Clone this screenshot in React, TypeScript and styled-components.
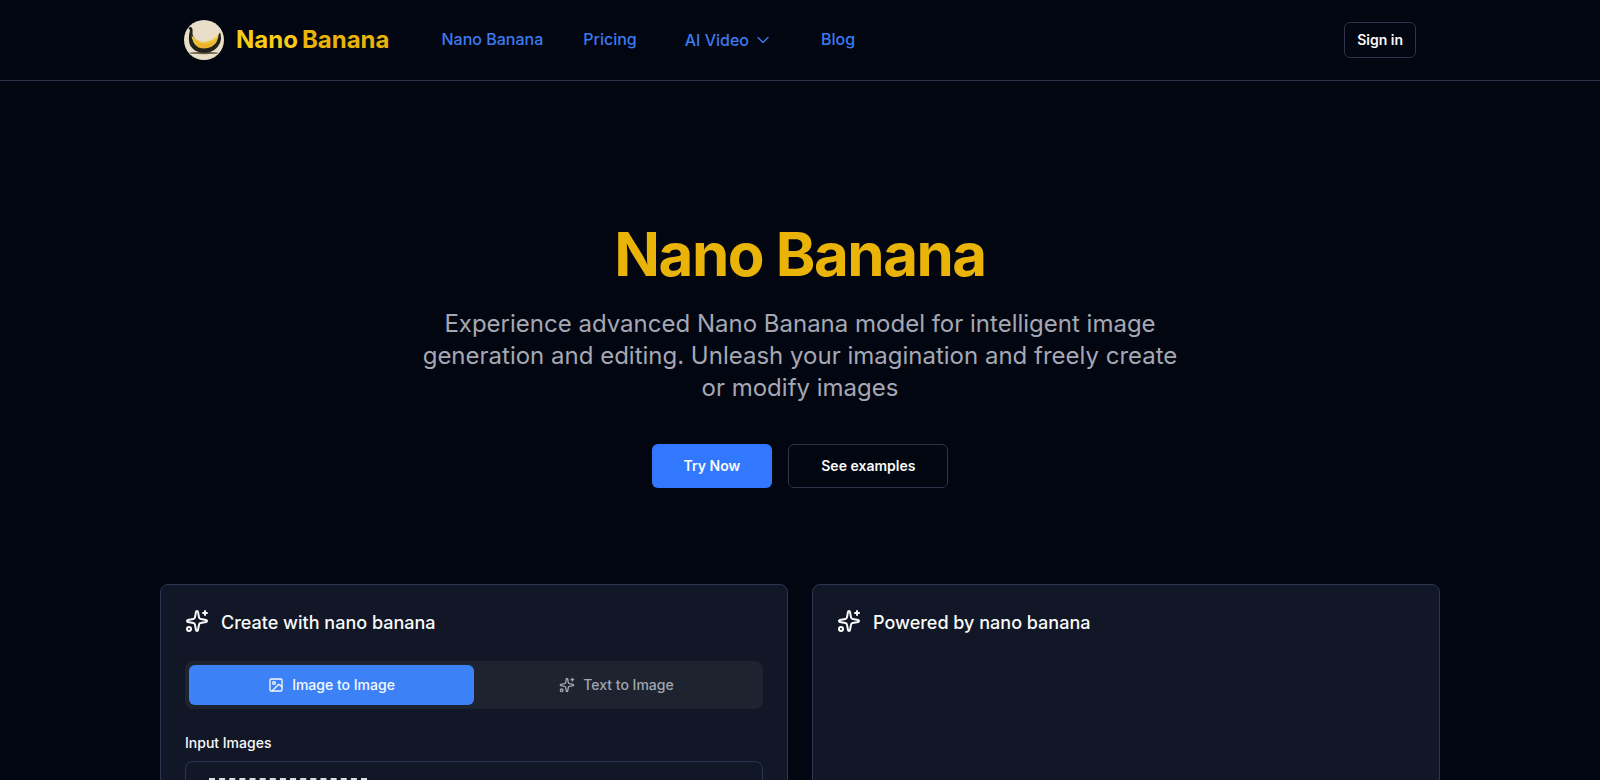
import React from "react";
import styled, { createGlobalStyle } from "styled-components";
import { ChevronDown, Image as ImageIcon } from "lucide-react";

const GlobalStyle = createGlobalStyle`
  *, *::before, *::after { box-sizing: border-box; }
  html { background: #020610; scrollbar-width: none; }
  body {
    margin: 0;
    background: #020610;
    color: #fafafa;
    font-family: Inter, "Liberation Sans", sans-serif;
    font-size: 16px;
    line-height: 24px;
  }
  h1, h2, p { margin: 0; }
  a { text-decoration: none; }
  button { font: inherit; color: inherit; cursor: pointer; }
`;

const Header = styled.header`
  border-bottom: 1px solid #2d3348;
`;

const HeaderInner = styled.div`
  max-width: 1280px;
  margin: 0 auto;
  padding: 20px 24px;
  display: flex;
  align-items: center;
`;

const Brand = styled.a`
  display: flex;
  align-items: center;
  gap: 12px;
`;

const BrandName = styled.span`
  display: flex;
  gap: 4px;
  color: #facc15;
  font-size: 24px;
  line-height: 32px;
  font-weight: 700;
`;

const BrandAccent = styled.span`
  color: #eab308;
`;

const Nav = styled.nav`
  display: flex;
  align-items: center;
  margin-left: 32px;
  color: #3c7af0;
  font-weight: 500;
`;

const NavLink = styled.a`
  color: inherit;
  padding: 7px 20px 9px;
`;

const NavMenuButton = styled.button`
  display: flex;
  align-items: center;
  gap: 4px;
  margin: 0 8px;
  padding: 8px 20px;
  border: 0;
  background: none;
  font-weight: 500;
`;

const Button = styled.button<{ $primary?: boolean; $large?: boolean }>`
  height: ${(p) => (p.$large ? 44 : 36)}px;
  padding: 0 ${(p) => (p.$large ? 32 : 12)}px;
  border: ${(p) => (p.$primary ? "0" : "1px solid #2d3348")};
  border-radius: 6px;
  background: ${(p) => (p.$primary ? "#3278ff" : "transparent")};
  font-size: 14px;
  line-height: 20px;
  font-weight: 600;
`;

const SignIn = styled(Button)`
  margin-left: auto;
`;

const Hero = styled.section`
  display: flex;
  flex-direction: column;
  align-items: center;
  padding: 143px 24px 96px;
  text-align: center;
`;

const HeroTitle = styled.h1`
  color: #eab308;
  font-size: 60px;
  line-height: 60px;
  font-weight: 700;
  letter-spacing: -0.025em;
`;

const HeroText = styled.p`
  max-width: 768px;
  margin-top: 24px;
  color: #a5a8b4;
  font-size: 24px;
  line-height: 32px;
`;

const HeroActions = styled.div`
  display: flex;
  gap: 16px;
  margin-top: 40px;
`;

const Workspace = styled.main`
  max-width: 1280px;
  margin: 0 auto;
  display: grid;
  grid-template-columns: 1fr 1fr;
  gap: 24px;
`;

const Card = styled.section`
  padding: 24px;
  border: 1px solid #2b3550;
  border-radius: 8px;
  background: #111726;
`;

const CardTitle = styled.h2`
  display: flex;
  align-items: flex-start;
  gap: 12px;
  font-size: 18px;
  line-height: 28px;
  font-weight: 500;
`;

const Tabs = styled.div`
  display: grid;
  grid-template-columns: 1fr 1fr;
  margin-top: 24px;
  padding: 4px;
  border-radius: 8px;
  background: #1e2330;
`;

const Tab = styled.button<{ $active?: boolean }>`
  display: flex;
  align-items: center;
  justify-content: center;
  gap: 8px;
  height: 40px;
  border: 0;
  border-radius: 6px;
  background: ${(p) => (p.$active ? "#3c82f6" : "transparent")};
  color: ${(p) => (p.$active ? "#f5f9ff" : "#a2a5af")};
  font-size: 14px;
  font-weight: 500;
`;

const FieldTitle = styled.p`
  margin-top: 24px;
  font-size: 14px;
  line-height: 20px;
  font-weight: 500;
`;

const UploadPanel = styled.div`
  margin-top: 8px;
  padding: 16px 23px;
  border: 1px solid #2b3550;
  border-radius: 8px;
`;

const UploadButton = styled.button`
  display: block;
  width: 158px;
  height: 158px;
  border: 2px dashed #dcdee4;
  background: none;
`;

function Sparkles({ size }: { size: number }) {
  return (
    <svg width={size} height={size} viewBox="0 0 24 24" fill="none" stroke="currentColor"
      strokeWidth="2" strokeLinecap="round" strokeLinejoin="round" aria-hidden="true">
      <path d="M11.017 2.814a1 1 0 0 1 1.966 0l1.051 5.558a2 2 0 0 0 1.594 1.594l5.558 1.051a1 1 0 0 1 0 1.966l-5.558 1.051a2 2 0 0 0-1.594 1.594l-1.051 5.558a1 1 0 0 1-1.966 0l-1.051-5.558a2 2 0 0 0-1.594-1.594l-5.558-1.051a1 1 0 0 1 0-1.966l5.558-1.051a2 2 0 0 0 1.594-1.594z" />
      <path d="M20 2v4M22 4h-4" />
      <circle cx="4" cy="20" r="2" />
    </svg>
  );
}

function BananaLogo() {
  return (
    <svg width="40" height="40" viewBox="0 0 40 40" aria-hidden="true">
      <defs>
        <clipPath id="disc"><circle cx="20" cy="20" r="20" /></clipPath>
        <linearGradient id="flesh" x1="0" y1="0" x2="0" y2="1">
          <stop offset="0" stopColor="#f9dc62" />
          <stop offset="1" stopColor="#eab022" />
        </linearGradient>
      </defs>
      <g clipPath="url(#disc)">
        <rect width="40" height="40" fill="#e9dfc8" />
        <ellipse cx="20" cy="33" rx="15" ry="1.2" fill="#6b6046" />
        <path d="M4.5 8.5L5.5 7L8 7.5L8.6 10Q8 14 9.5 17Q14 23 22 23Q30 21 36 12.5Q38 18 36 23Q32 32 21 33Q11 33 6.5 26Q3.5 20 6 10Z" fill="#20221c" />
        <path d="M7.5 15.5Q13 21.500 20 22Q28 21.500 34.800 13.500Q34 23 28 26.500Q21 30 14.500 27.500Q8.500 24 7.500 15.500Z" fill="url(#flesh)" />
        <path d="M9.500 19.500Q15 25.500 22 25.500Q29 24.500 33 18.500" fill="none" stroke="#d29a1a" strokeWidth="0.5" />
      </g>
    </svg>
  );
}

export default function App() {
  return (
    <>
      <GlobalStyle />
      <Header>
        <HeaderInner>
          <Brand href="#">
            <BananaLogo />
            <BrandName>
              <span>Nano</span>
              <BrandAccent>Banana</BrandAccent>
            </BrandName>
          </Brand>
          <Nav>
            <NavLink href="#create">Nano Banana</NavLink>
            <NavLink href="#pricing">Pricing</NavLink>
            <NavMenuButton type="button">
              AI Video
              <ChevronDown size={20} strokeWidth={1.5} />
            </NavMenuButton>
            <NavLink href="#blog">Blog</NavLink>
          </Nav>
          <SignIn type="button">Sign in</SignIn>
        </HeaderInner>
      </Header>
      <Hero>
        <HeroTitle>Nano Banana</HeroTitle>
        <HeroText>
          Experience advanced Nano Banana model for intelligent image generation and editing.
          Unleash your imagination and freely create or modify images
        </HeroText>
        <HeroActions>
          <Button type="button" $primary $large>Try Now</Button>
          <Button type="button" $large>See examples</Button>
        </HeroActions>
      </Hero>
      <Workspace id="create">
        <Card>
          <CardTitle><Sparkles size={24} />Create with nano banana</CardTitle>
          <Tabs role="tablist">
            <Tab type="button" role="tab" aria-selected="true" $active>
              <ImageIcon size={16} />
              Image to Image
            </Tab>
            <Tab type="button" role="tab" aria-selected="false">
              <Sparkles size={16} />
              Text to Image
            </Tab>
          </Tabs>
          <FieldTitle>Input Images</FieldTitle>
          <UploadPanel>
            <UploadButton type="button" aria-label="Upload input images" />
          </UploadPanel>
        </Card>
        <Card>
          <CardTitle><Sparkles size={24} />Powered by nano banana</CardTitle>
        </Card>
      </Workspace>
    </>
  );
}
